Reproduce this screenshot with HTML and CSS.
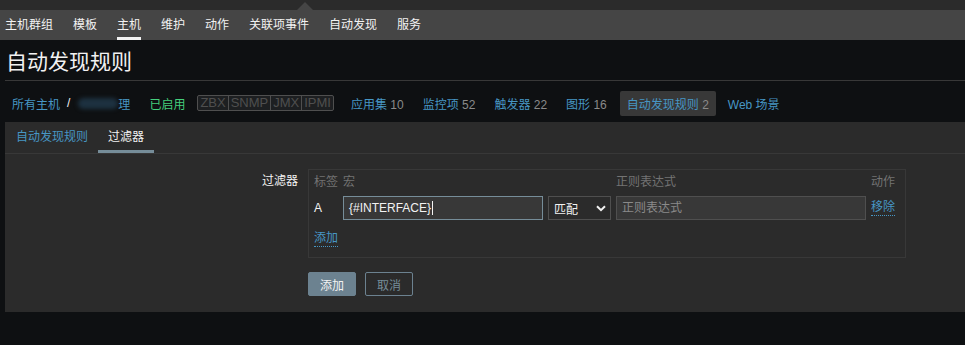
FILE: index.html
```html
<!DOCTYPE html>
<html lang="zh-CN">
<head>
    <meta charset="UTF-8">
    <title>自动发现规则</title>
    <link rel="stylesheet" href="styles.css">
</head>
<body>
    <div class="top-strip"><span class="notch"></span></div>
    <nav class="main-nav">
        <a href="#">主机群组</a>
        <a href="#">模板</a>
        <a href="#" class="selected">主机</a>
        <a href="#">维护</a>
        <a href="#">动作</a>
        <a href="#">关联项事件</a>
        <a href="#">自动发现</a>
        <a href="#">服务</a>
    </nav>

    <header class="page-header">
        <h1>自动发现规则</h1>
    </header>

    <div class="breadcrumbs">
        <a href="#" class="crumb">所有主机</a>
        <span class="slash">/</span>
        <span class="crumb hidden-name"><span class="smudge"></span>理</span>
        <span class="status-on">已启用</span>
        <span class="avail">
            <span>ZBX</span><span>SNMP</span><span>JMX</span><span>IPMI</span>
        </span>
        <a href="#" class="crumb">应用集 <em>10</em></a>
        <a href="#" class="crumb">监控项 <em>52</em></a>
        <a href="#" class="crumb">触发器 <em>22</em></a>
        <a href="#" class="crumb">图形 <em>16</em></a>
        <a href="#" class="crumb current">自动发现规则 <em>2</em></a>
        <a href="#" class="crumb">Web 场景</a>
    </div>

    <div class="panel">
        <div class="tabs">
            <a href="#">自动发现规则</a>
            <a href="#" class="active">过滤器</a>
        </div>

        <div class="form-row">
            <label class="form-label">过滤器</label>
            <div class="filter-box">
                <div class="filter-grid">
                    <span class="th">标签</span>
                    <span class="th">宏</span>
                    <span class="th"></span>
                    <span class="th">正则表达式</span>
                    <span class="th">动作</span>

                    <span class="cond">A</span>
                    <div class="input focused">{#INTERFACE}<span class="caret"></span></div>
                    <div class="select">
                        <span>匹配</span>
                        <svg width="10" height="7" viewBox="0 0 10 7"><path d="M1 1.2 L5 5.2 L9 1.2" fill="none" stroke="#f2f2f2" stroke-width="2"/></svg>
                    </div>
                    <div class="input placeholder">正则表达式</div>
                    <a href="#" class="link-dotted">移除</a>
                </div>
                <a href="#" class="link-dotted add-link">添加</a>
            </div>
        </div>

        <div class="buttons">
            <button class="btn-main">添加</button>
            <button class="btn-alt">取消</button>
        </div>
    </div>
</body>
</html>
```

FILE: styles.css
```css
body {
    margin: 0;
    background-color: #0e1012;
    font-family: "Liberation Sans", Arial, "Noto Sans CJK SC", sans-serif;
    font-size: 12px;
    color: #f2f2f2;
    width: 965px;
    height: 345px;
    overflow: hidden;
}
a {
    text-decoration: none;
}
.top-strip {
    height: 10px;
    background-color: #2b2b2b;
    position: relative;
}
.notch {
    position: absolute;
    left: 297px;
    top: 2px;
    width: 0;
    height: 0;
    border-left: 8px solid transparent;
    border-right: 8px solid transparent;
    border-bottom: 8px solid #454545;
}
.main-nav {
    height: 30px;
    background-color: #454545;
    display: flex;
    gap: 20px;
    padding-left: 5px;
}
.main-nav a {
    color: #f2f2f2;
    line-height: 30px;
    height: 30px;
    box-sizing: border-box;
}
.main-nav a.selected {
    border-bottom: 3px solid #f2f2f2;
}
.page-header {
    margin: 0 0 0 5px;
    height: 41px;
    border-bottom: 1px solid #383838;
    box-sizing: border-box;
}
h1 {
    margin: 0;
    padding: 10px 0 0 1px;
    font-size: 21px;
    font-weight: normal;
    line-height: 24px;
    color: #f2f2f2;
}
.breadcrumbs {
    display: flex;
    align-items: center;
    height: 22px;
    margin: 11px 0 0 12px;
}
.crumb {
    color: #4796c4;
    margin-right: 19px;
}
.crumb em {
    font-style: normal;
    color: #8a8a8a;
}
.crumb.current {
    background-color: #383838;
    border-radius: 2px;
    padding: 4px 7px;
    margin-left: -6px;
    margin-right: 12px;
}
.slash {
    color: #f2f2f2;
    margin: 0 8px 0 -12px;
}
.hidden-name {
    display: inline-flex;
    align-items: center;
    margin-right: 19px;
}
.smudge {
    display: inline-block;
    width: 40px;
    height: 11px;
    background-color: #1d3140;
    border-radius: 6px;
    filter: blur(2px);
}
.status-on {
    color: #45cf7c;
    margin-right: 12px;
}
.avail {
    display: inline-flex;
    border: 1px solid #4f4f4f;
    border-radius: 2px;
    background-color: #1d1f21;
    margin-right: 17px;
}
.avail span {
    color: #4f4f4f;
    font-size: 13px;
    line-height: 14px;
    padding: 0 2px;
    border-left: 1px solid #4f4f4f;
}
.avail span:first-child {
    border-left: none;
}
.panel {
    margin: 8px 0 0 5px;
    height: 190px;
    background-color: #2b2b2b;
}
.tabs {
    display: flex;
    height: 32px;
    border-bottom: 1px solid #383838;
    box-sizing: border-box;
    padding-left: 1px;
}
.tabs a {
    color: #4796c4;
    padding: 0 10px;
    line-height: 30px;
    height: 31px;
    box-sizing: border-box;
}
.tabs a.active {
    color: #f2f2f2;
    border-bottom: 3px solid #768d99;
}
.form-row {
    display: flex;
    margin-top: 15px;
}
.form-label {
    width: 303px;
    text-align: right;
    padding-right: 10px;
    box-sizing: border-box;
    padding-top: 2px;
}
.filter-box {
    width: 598px;
    height: 89px;
    border: 1px solid #383838;
    box-sizing: border-box;
    padding: 4px 5px 0 5px;
}
.filter-grid {
    display: grid;
    grid-template-columns: 24px 200px 63px 250px auto;
    column-gap: 5px;
    row-gap: 5px;
    align-items: center;
}
.th {
    color: #737373;
    line-height: 17px;
}
.cond {
    color: #f2f2f2;
}
.input {
    height: 24px;
    box-sizing: border-box;
    background-color: #383838;
    border: 1px solid #4f4f4f;
    padding: 0 5px;
    line-height: 22px;
    color: #f2f2f2;
    display: flex;
    align-items: center;
    white-space: nowrap;
}
.input.focused {
    border-color: #768d99;
}
.input.placeholder {
    color: #8a8a8a;
}
.caret {
    display: inline-block;
    width: 1px;
    height: 14px;
    background-color: #f2f2f2;
    margin-left: 1px;
}
.select {
    height: 24px;
    box-sizing: border-box;
    background-color: #2b2b2b;
    border: 1px solid #4f4f4f;
    display: flex;
    align-items: center;
    justify-content: space-between;
    padding: 0 4px 0 5px;
    color: #f2f2f2;
}
.link-dotted {
    color: #4796c4;
    border-bottom: 1px dotted #4796c4;
    justify-self: start;
    line-height: 15px;
}
.add-link {
    display: inline-block;
    margin-top: 11px;
}
.buttons {
    display: flex;
    gap: 9px;
    margin: 14px 0 0 303px;
}
.buttons button {
    font-family: inherit;
    font-size: 12px;
    height: 24px;
    width: 48px;
    border-radius: 2px;
    cursor: pointer;
}
.btn-main {
    background-color: #6c8290;
    border: 1px solid #6c8290;
    color: #f2f2f2;
}
.btn-alt {
    background-color: transparent;
    border: 1px solid #6c8290;
    color: #768d99;
}
```
